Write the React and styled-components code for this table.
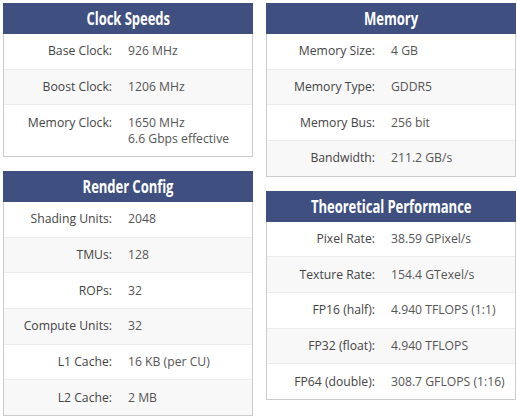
import React from "react";
import styled, { createGlobalStyle } from "styled-components";

const Global = createGlobalStyle`
  html, body { margin: 0; padding: 0; background: #fff; }
  body { font-family: "Open Sans", "Noto Sans", sans-serif; }
`;

const Page = styled.div`
  display: grid;
  grid-template-columns: 250px 250px;
  column-gap: 13px;
  padding: 3px 0 0 3px;
  align-items: start;
`;

const Column = styled.div`
  display: flex;
  flex-direction: column;
  gap: 14px;
`;

const Panel = styled.section`
  border: 1px solid #cccccc;
  border-top: 0;
  background: #fff;
`;

const Header = styled.h2`
  margin: 0 -1px;
  height: 31px;
  background: #3e4f80;
  color: #fff;
  display: flex;
  align-items: center;
  justify-content: center;
  font-family: "Open Sans", sans-serif;
  font-weight: 700;
  font-size: 17px;
  line-height: 1;
`;

const Title = styled.span`
  display: inline-block;
  transform: scaleX(0.77);
  white-space: nowrap;
  letter-spacing: -0.1px;
`;

const Row = styled.div`
  display: grid;
  grid-template-columns: 108px 1fr;
  column-gap: 16px;
  padding: 9.33px 0;
  line-height: 16px;
  font-size: 12.2px;
  background: ${(p) => (p.$odd ? "#f8f8f8" : "#fff")};
  border-bottom: 1px solid #ececec;
  &:last-child { border-bottom: 0; }
`;

const Label = styled.div`
  text-align: right;
  color: #444;
  white-space: nowrap;
`;

const Value = styled.div`
  color: #555;
  white-space: nowrap;
`;

const Card = ({ title, rows }) => (
  <Panel>
    <Header>
      <Title>{title}</Title>
    </Header>
    {rows.map(([k, v], i) => (
      <Row key={k} $odd={i % 2 === 1}>
        <Label>{k}</Label>
        <Value>
          {Array.isArray(v) ? v.map((l) => <div key={l}>{l}</div>) : v}
        </Value>
      </Row>
    ))}
  </Panel>
);

export default function App() {
  return (
    <>
      <Global />
      <Page>
        <Column>
          <Card
            title="Clock Speeds"
            rows={[
              ["Base Clock:", "926 MHz"],
              ["Boost Clock:", "1206 MHz"],
              ["Memory Clock:", ["1650 MHz", "6.6 Gbps effective"]],
            ]}
          />
          <Card
            title="Render Config"
            rows={[
              ["Shading Units:", "2048"],
              ["TMUs:", "128"],
              ["ROPs:", "32"],
              ["Compute Units:", "32"],
              ["L1 Cache:", "16 KB (per CU)"],
              ["L2 Cache:", "2 MB"],
            ]}
          />
        </Column>
        <Column>
          <Card
            title="Memory"
            rows={[
              ["Memory Size:", "4 GB"],
              ["Memory Type:", "GDDR5"],
              ["Memory Bus:", "256 bit"],
              ["Bandwidth:", "211.2 GB/s"],
            ]}
          />
          <Card
            title="Theoretical Performance"
            rows={[
              ["Pixel Rate:", "38.59 GPixel/s"],
              ["Texture Rate:", "154.4 GTexel/s"],
              ["FP16 (half):", "4.940 TFLOPS (1:1)"],
              ["FP32 (float):", "4.940 TFLOPS"],
              ["FP64 (double):", "308.7 GFLOPS (1:16)"],
            ]}
          />
        </Column>
      </Page>
    </>
  );
}
